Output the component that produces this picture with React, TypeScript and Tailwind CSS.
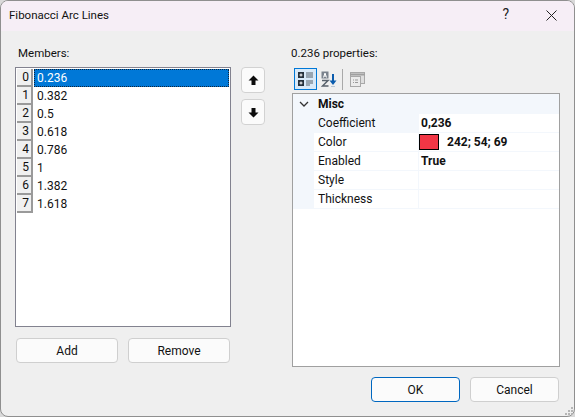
const members = ["0.236", "0.382", "0.5", "0.618", "0.786", "1", "1.382", "1.618"]

const props = [
  { name: "Coefficient", value: "0,236", active: true },
  { name: "Color", value: "242; 54; 69", swatch: true },
  { name: "Enabled", value: "True" },
  { name: "Style", value: "" },
  { name: "Thickness", value: "" },
]

function ArrowIcon({ down }: { down?: boolean }) {
  return (
    <svg width="11" height="11" viewBox="0 0 11 11">
      <path d={down ? "M3.5 1h4v4.5H10.5L5.5 10.5 .5 5.5h3z" : "M3.5 10h4V5.5H10.5L5.5 .5 .5 5.5h3z"} fill="#0c0c0c" />
    </svg>
  )
}

function CategorizedIcon() {
  return (
    <svg width="16" height="16" viewBox="0 0 16 16">
      <rect x="0" y="1" width="6" height="6" fill="#26313c" />
      <rect x="0" y="9" width="6" height="6" fill="#26313c" />
      <path d="M1.500 4h3M3 2.500v3M1.500 12h3M3 10.500v3" stroke="#fff" />
      <path d="M8 2h7M8 4h7M8 6h7M8 10h7M8 12h7M8 14h4" stroke="#56606a" />
    </svg>
  )
}

function SortIcon() {
  return (
    <svg width="17" height="17" viewBox="0 0 17 17">
      <rect x="0.5" y="0.5" width="7" height="7" fill="#7a828c" />
      <path d="M2.500 6.500 4 2l1.500 4.500M3 5h2" stroke="#fff" strokeWidth="1" fill="none" />
      <path d="M1 9.500h6L1.500 15h6" stroke="#59626c" strokeWidth="1.500" fill="none" />
      <path d="M12 3v8" stroke="#0b5cad" strokeWidth="2" />
      <path d="M8.500 9.500h7L12 14z" fill="#0b5cad" />
      <path d="M10 15.500h4" stroke="#b9c6d3" strokeWidth="1" />
    </svg>
  )
}

function PagesIcon() {
  return (
    <svg width="15" height="15" viewBox="0 0 15 15">
      <rect x="0.500" y="0.500" width="14" height="11" fill="#dedede" stroke="#a8a8a8" />
      <path d="M0 2.500h15" stroke="#a0a0a0" strokeWidth="2" />
      <rect x="0.500" y="4.500" width="10" height="10" fill="#ececec" stroke="#a8a8a8" />
      <path d="M3 8h1M5 8h3M3 10.500h1M5 10.500h3" stroke="#9a9a9a" />
    </svg>
  )
}

function WinButton({ label, width, primary }: { label: string; width: string; primary?: boolean }) {
  return (
    <button
      className={`h-[25px] ${width} rounded-[4px] border bg-[#fbfbfb] text-[12px] text-[#111] ${
        primary ? "border-[1.5px] border-[#0067c0]" : "border-[#cfcfcf]"
      }`}
    >
      {label}
    </button>
  )
}

export default function App() {
  return (
    <div className="h-[417px] w-[575px] overflow-hidden bg-[#d9d9d9]" style={{ fontFamily: 'Roboto, sans-serif' }}>
      <div className="flex h-[417px] flex-col overflow-hidden rounded-[8px] border border-[#8f8f8f] bg-[#efefef]">
        {/* Barra de titulo */}
        <div className="flex h-[30px] shrink-0 items-center justify-between bg-[#f6eef6] pl-[8px]">
          <span className="text-[11.500px] text-[#111]">Fibonacci Arc Lines</span>
          <div className="flex items-center">
            <span className="mb-[4px] mr-[37px] text-[14px] leading-none text-[#222]">?</span>
            <svg width="11" height="11" viewBox="0 0 11 11" className="mb-[2px] mr-[17px]">
              <path d="M.5.5l10 10M10.500.5l-10 10" stroke="#222" strokeWidth="1" />
            </svg>
          </div>
        </div>

        <div className="relative flex min-h-0 flex-1">
          {/* Coluna esquerda */}
          <div className="ml-[14px] flex w-[216px] shrink-0 flex-col">
            <div className="ml-[3px] mt-[14px] h-[17px] text-[11.500px] leading-[17px] text-[#111]">Members:</div>
            <div className="mt-[5px] h-[260px] border border-[#82828f] bg-white p-[1px]">
              {members.map((m, i) => (
                <div key={m} className="flex h-[18px] items-center">
                  <div className="flex h-[18px] w-[16px] shrink-0 items-center justify-end border-b-2 border-r-2 border-[#9a9a9a] bg-[#f0f0f0] pr-[2px] text-[12px] text-[#111]">
                    {i}
                  </div>
                  <div
                    className={`ml-[1px] flex h-[18px] flex-1 items-center text-[12px] ${
                      i === 0
                        ? "border border-dotted border-[#10243a] bg-[#0078d7] pl-[2px] text-white"
                        : "pl-[3px] text-[#111]"
                    }`}
                  >
                    {m}
                  </div>
                </div>
              ))}
            </div>
            <div className="mt-[11px] flex justify-between px-[1px]">
              <WinButton label="Add" width="w-[102px]" />
              <WinButton label="Remove" width="w-[102px]" />
            </div>
          </div>

          {/* Botoes de ordem */}
          <div className="ml-[10px] mt-[36px] flex w-[24px] shrink-0 flex-col gap-[6px]">
            <button className="flex h-[26px] w-[24px] items-center justify-center rounded-[4px] border border-[#d2d2d2] bg-[#fbfbfb]">
              <ArrowIcon />
            </button>
            <button className="flex h-[26px] w-[24px] items-center justify-center rounded-[4px] border border-[#d2d2d2] bg-[#fbfbfb]">
              <ArrowIcon down />
            </button>
          </div>

          {/* Coluna direita */}
          <div className="ml-[27px] flex w-[268px] shrink-0 flex-col">
            <div className="-ml-[1px] mt-[14px] h-[17px] text-[11.500px] leading-[17px] text-[#111]">0.236 properties:</div>
            <div className="ml-[2px] mt-[6px] flex h-[22px] items-center">
              <div className="flex h-[22px] w-[23px] items-center justify-center border border-[#0078d7] bg-[#d8e9f8]">
                <CategorizedIcon />
              </div>
              <div className="ml-[3px] flex h-[22px] w-[19px] items-center justify-center">
                <SortIcon />
              </div>
              <div className="ml-[3px] h-[21px] w-[1px] bg-[#a9a9a9]" />
              <div className="ml-[7px] flex h-[22px] items-center">
                <PagesIcon />
              </div>
            </div>
            <div className="mt-[3px] h-[274px] border border-[#a0a0a0] bg-white text-[12px] text-[#111]">
              <div className="flex h-[20px] items-center bg-[#f3f7fc]">
                <svg width="10" height="6" viewBox="0 0 10 6" className="ml-[6px]">
                  <path d="M1 1l4 4 4-4" stroke="#333" strokeWidth="1.300" fill="none" />
                </svg>
                <span className="ml-[9px] font-bold">Misc</span>
              </div>
              {props.map((p) => (
                <div key={p.name} className="flex h-[19px] bg-[#f3f7fc]">
                  <div className="w-[21px] shrink-0" />
                  <div
                    className={`flex w-[104px] shrink-0 items-center border-b border-[#f3f7fc] pl-[4px] ${
                      p.active ? "bg-[#f3f7fc]" : "bg-white"
                    }`}
                  >
                    {p.name}
                  </div>
                  <div className="flex flex-1 items-center gap-[8px] border-b border-l border-[#f3f7fc] bg-white pl-[2px] font-bold">
                    {p.swatch && <span className="-ml-[2px] h-[16px] w-[20px] border border-black bg-[#f23645]" />}
                    {p.value}
                  </div>
                </div>
              ))}
            </div>
            <div className="ml-[79px] mt-[10px] flex gap-[10px]">
              <WinButton label="OK" width="w-[89px]" primary />
              <WinButton label="Cancel" width="w-[89px]" />
            </div>
          </div>

          {/* Alca de redimensionar */}
          <svg width="10" height="10" viewBox="0 0 10 10" className="absolute bottom-0 right-0">
            <path d="M7 1h2v2H7zM4 4h2v2H4zM7 4h2v2H7zM1 7h2v2H1zM4 7h2v2H4zM7 7h2v2H7z" fill="#b5b5b5" />
          </svg>
        </div>
      </div>
    </div>
  )
}
